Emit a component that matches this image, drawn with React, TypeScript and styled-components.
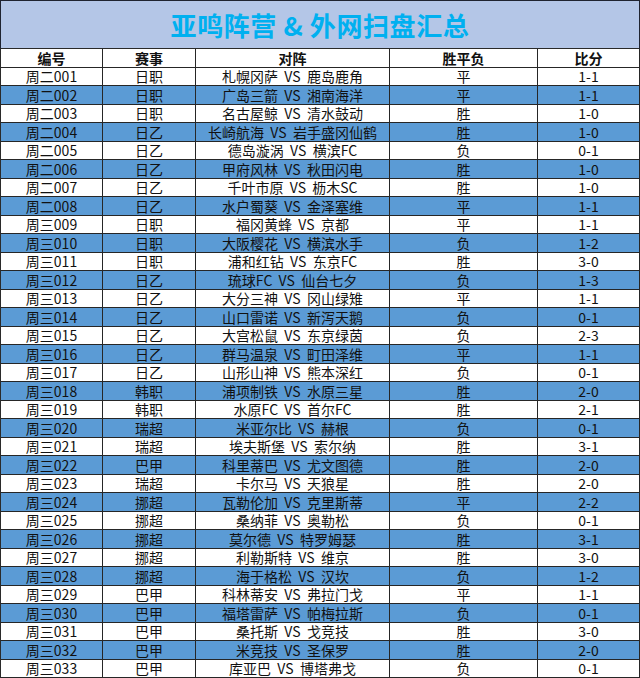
import styled, { createGlobalStyle } from 'styled-components';

const GlobalStyle = createGlobalStyle`
    html, body {
        margin: 0;
        padding: 0;
        background: #ffffff;
    }
`;

const Sheet = styled.div`
    width: 640px;
    height: 678px;
    box-sizing: border-box;
    overflow: hidden;

    display: flex;
    flex-direction: column;

    font-family: "Liberation Sans", "Noto Sans CJK SC", sans-serif;
`;

const TitleBar = styled.div`
    height: 49px;
    box-sizing: border-box;

    display: flex;
    align-items: center;
    justify-content: center;

    border-top: 1px solid #1f2330;
    border-left: 1px solid #1f2330;
    border-right: 1px solid #1f2330;
    border-bottom: 1px solid #2a2a2a;

    background-color: #b4c6e7;

    color: #00b0f0;
    font-family: "Noto Sans CJK SC", sans-serif;
    font-size: 26px;
    font-weight: 700;
    letter-spacing: 0.6px;
`;

const Table = styled.div`
    display: grid;
    grid-template-columns: 102px 93px 194px 148px 102px;
    grid-auto-rows: 18.5px;
    border-left: 1px solid #2a2a2a;
`;

const Cell = styled.div<{ $blue: boolean; $head?: boolean }>`
    box-sizing: border-box;
    border-right: 1px solid #262626;
    border-bottom: 1px solid #262626;

    display: flex;
    align-items: center;
    justify-content: center;

    background-color: ${({ $blue }) => ($blue ? '#5b9bd5' : '#ffffff')};
    color: #111111;
    font-family: "Noto Sans CJK SC", sans-serif;
    font-size: 14px;
    font-weight: ${({ $head }) => ($head ? 700 : 400)};
    line-height: 1;
    white-space: pre;
`;

type Match = [string, string, string, string, string, string];

const matches: Match[] = [
    ['周二001', '日职', '札幌冈萨', '鹿岛鹿角', '平', '1-1'],
    ['周二002', '日职', '广岛三箭', '湘南海洋', '平', '1-1'],
    ['周二003', '日职', '名古屋鲸', '清水鼓动', '胜', '1-0'],
    ['周二004', '日乙', '长崎航海', '岩手盛冈仙鹤', '胜', '1-0'],
    ['周二005', '日乙', '德岛漩涡', '横滨FC', '负', '0-1'],
    ['周二006', '日乙', '甲府风林', '秋田闪电', '胜', '1-0'],
    ['周二007', '日乙', '千叶市原', '枥木SC', '胜', '1-0'],
    ['周二008', '日乙', '水户蜀葵', '金泽塞维', '平', '1-1'],
    ['周三009', '日职', '福冈黄蜂', '京都', '平', '1-1'],
    ['周三010', '日职', '大阪樱花', '横滨水手', '负', '1-2'],
    ['周三011', '日职', '浦和红钻', '东京FC', '胜', '3-0'],
    ['周三012', '日乙', '琉球FC', '仙台七夕', '负', '1-3'],
    ['周三013', '日乙', '大分三神', '冈山绿雉', '平', '1-1'],
    ['周三014', '日乙', '山口雷诺', '新泻天鹅', '负', '0-1'],
    ['周三015', '日乙', '大宫松鼠', '东京绿茵', '负', '2-3'],
    ['周三016', '日乙', '群马温泉', '町田泽维', '平', '1-1'],
    ['周三017', '日乙', '山形山神', '熊本深红', '负', '0-1'],
    ['周三018', '韩职', '浦项制铁', '水原三星', '胜', '2-0'],
    ['周三019', '韩职', '水原FC', '首尔FC', '胜', '2-1'],
    ['周三020', '瑞超', '米亚尔比', '赫根', '负', '0-1'],
    ['周三021', '瑞超', '埃夫斯堡', '索尔纳', '胜', '3-1'],
    ['周三022', '巴甲', '科里蒂巴', '尤文图德', '胜', '2-0'],
    ['周三023', '瑞超', '卡尔马', '天狼星', '胜', '2-0'],
    ['周三024', '挪超', '瓦勒伦加', '克里斯蒂', '平', '2-2'],
    ['周三025', '挪超', '桑纳菲', '奥勒松', '负', '0-1'],
    ['周三026', '挪超', '莫尔德', '特罗姆瑟', '胜', '3-1'],
    ['周三027', '挪超', '利勒斯特', '维京', '胜', '3-0'],
    ['周三028', '挪超', '海于格松', '汉坎', '负', '1-2'],
    ['周三029', '巴甲', '科林蒂安', '弗拉门戈', '平', '1-1'],
    ['周三030', '巴甲', '福塔雷萨', '帕梅拉斯', '负', '0-1'],
    ['周三031', '巴甲', '桑托斯', '戈竞技', '胜', '3-0'],
    ['周三032', '巴甲', '米竞技', '圣保罗', '胜', '2-0'],
    ['周三033', '巴甲', '库亚巴', '博塔弗戈', '负', '0-1'],
];

const headers = ['编号', '赛事', '对阵', '胜平负', '比分'];

export default function App() {
    return (
        <>
            <GlobalStyle />
            <Sheet>
                <TitleBar>亚鸣阵营 &amp; 外网扫盘汇总</TitleBar>
                <Table>
                    {headers.map((h) => (
                        <Cell key={h} $blue={false} $head>{h}</Cell>
                    ))}
                    {matches.map((m, i) => {
                        const blue = i % 2 === 1;
                        return [
                            <Cell key={`${i}-a`} $blue={blue}>{m[0]}</Cell>,
                            <Cell key={`${i}-b`} $blue={blue}>{m[1]}</Cell>,
                            <Cell key={`${i}-c`} $blue={blue}>{`${m[2]}  VS  ${m[3]}`}</Cell>,
                            <Cell key={`${i}-d`} $blue={blue}>{m[4]}</Cell>,
                            <Cell key={`${i}-e`} $blue={blue}>{m[5]}</Cell>,
                        ];
                    })}
                </Table>
            </Sheet>
        </>
    );
}
